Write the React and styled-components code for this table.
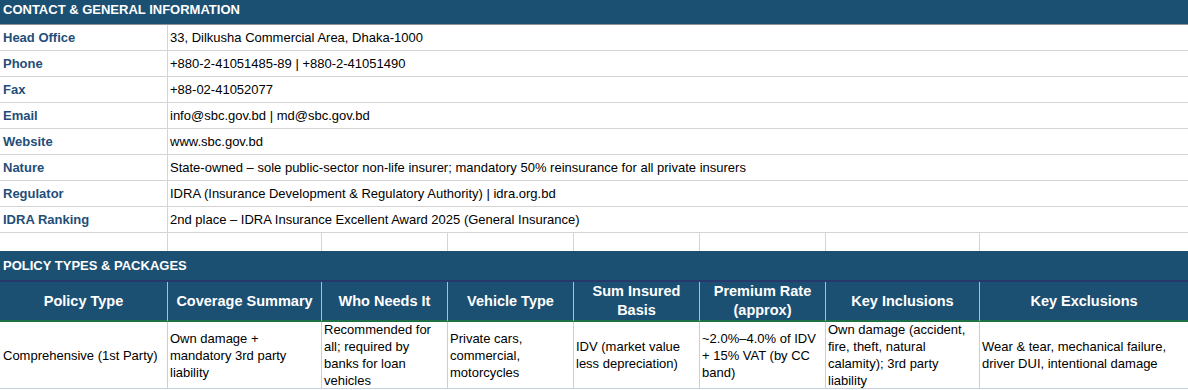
import React from "react";
import styled, { createGlobalStyle } from "styled-components";

const Global = createGlobalStyle`
  html, body { margin: 0; padding: 0; background: #ffffff; }
  body { font-family: "Liberation Sans", Arial, sans-serif; }
  * { box-sizing: border-box; }
`;

const BLUE = "#1c5073";

const Sheet = styled.div`
  display: grid;
  grid-template-columns: 168px 154px 126px 126px 126px 126px 154px 208px;
  width: 1188px;
  font-family: "Liberation Sans", Arial, sans-serif;
`;

const SectionTitle = styled.div`
  grid-column: 1 / -1;
  background: ${BLUE};
  color: #ffffff;
  font-weight: bold;
  font-size: 13px;
  text-transform: uppercase;
  padding: 0 3px;
  display: flex;
  align-items: ${(p) => (p.$top ? "flex-start" : "center")};
  padding-top: ${(p) => (p.$top ? "2px" : "0")};
  line-height: 15px;
  height: ${(p) => p.$h}px;
  border-bottom: ${(p) => p.$border};
`;

const LabelCell = styled.div`
  height: 26px;
  display: flex;
  align-items: center;
  padding: 0 3px;
  font-size: 13px;
  font-weight: bold;
  color: #1f4e79;
  border-right: 1px solid #d4d4d4;
  border-bottom: 1px solid #d4d4d4;
  white-space: nowrap;
`;

const ValueCell = styled.div`
  grid-column: 2 / -1;
  height: 26px;
  display: flex;
  align-items: center;
  padding: 0 3px 0 2px;
  font-size: 13px;
  color: #000000;
  border-bottom: 1px solid #d4d4d4;
  white-space: nowrap;
`;

const EmptyCell = styled.div`
  height: 18px;
  border-right: ${(p) => (p.$last ? "none" : "1px solid #d4d4d4")};
`;

const HeaderCell = styled.div`
  height: 40px;
  display: flex;
  align-items: center;
  justify-content: center;
  text-align: center;
  padding: 0 4px;
  background: ${BLUE};
  color: #ffffff;
  font-weight: bold;
  font-size: 14.5px;
  line-height: 19px;
  border-right: ${(p) => (p.$last ? "none" : "1px solid #a9bfd2")};
  border-bottom: 2px solid #1e7145;
`;

const DataCell = styled.div`
  height: 67px;
  display: flex;
  align-items: center;
  padding: 0 3px 0 ${(p) => (p.$first ? "3px" : "2px")};
  font-size: 13px;
  line-height: 17px;
  color: #000000;
  border-right: ${(p) => (p.$last ? "none" : "1px solid #c5d0dd")};
  border-bottom: 1px solid #c5d0dd;
  white-space: ${(p) => (p.$first ? "nowrap" : "normal")};
  overflow: visible;
`;

const contact = [
  ["Head Office", "33, Dilkusha Commercial Area, Dhaka-1000"],
  ["Phone", "+880-2-41051485-89 | +880-2-41051490"],
  ["Fax", "+88-02-41052077"],
  ["Email", "info@sbc.gov.bd | md@sbc.gov.bd"],
  ["Website", "www.sbc.gov.bd"],
  [
    "Nature",
    "State-owned \u2013 sole public-sector non-life insurer; mandatory 50% reinsurance for all private insurers",
  ],
  ["Regulator", "IDRA (Insurance Development & Regulatory Authority) | idra.org.bd"],
  ["IDRA Ranking", "2nd place \u2013 IDRA Insurance Excellent Award 2025 (General Insurance)"],
];

const headers = [
  "Policy Type",
  "Coverage Summary",
  "Who Needs It",
  "Vehicle Type",
  "Sum Insured Basis",
  "Premium Rate (approx)",
  "Key Inclusions",
  "Key Exclusions",
];

const row = [
  "Comprehensive (1st Party)",
  "Own damage + mandatory 3rd party liability",
  "Recommended for all; required by banks for loan vehicles",
  "Private cars, commercial, motorcycles",
  "IDV (market value less depreciation)",
  "~2.0%\u20134.0% of IDV + 15% VAT (by CC band)",
  "Own damage (accident, fire, theft, natural calamity); 3rd party liability",
  "Wear & tear, mechanical failure, driver DUI, intentional damage",
];

export default function App() {
  return (
    <>
      <Global />
      <Sheet>
        <SectionTitle $h={25} $top $border="1px solid #8e9499">
          Contact &amp; General Information
        </SectionTitle>
        {contact.map(([k, v]) => (
          <React.Fragment key={k}>
            <LabelCell>{k}</LabelCell>
            <ValueCell>{v}</ValueCell>
          </React.Fragment>
        ))}
        {headers.map((h, i) => (
          <EmptyCell key={"e" + i} $last={i === headers.length - 1} />
        ))}
        <SectionTitle $h={31} $border="2px solid #27386a">
          Policy Types &amp; Packages
        </SectionTitle>
        {headers.map((h, i) => (
          <HeaderCell key={h} $last={i === headers.length - 1}>
            {h}
          </HeaderCell>
        ))}
        {row.map((c, i) => (
          <DataCell key={i} $first={i === 0} $last={i === row.length - 1}>
            {c}
          </DataCell>
        ))}
      </Sheet>
    </>
  );
}
